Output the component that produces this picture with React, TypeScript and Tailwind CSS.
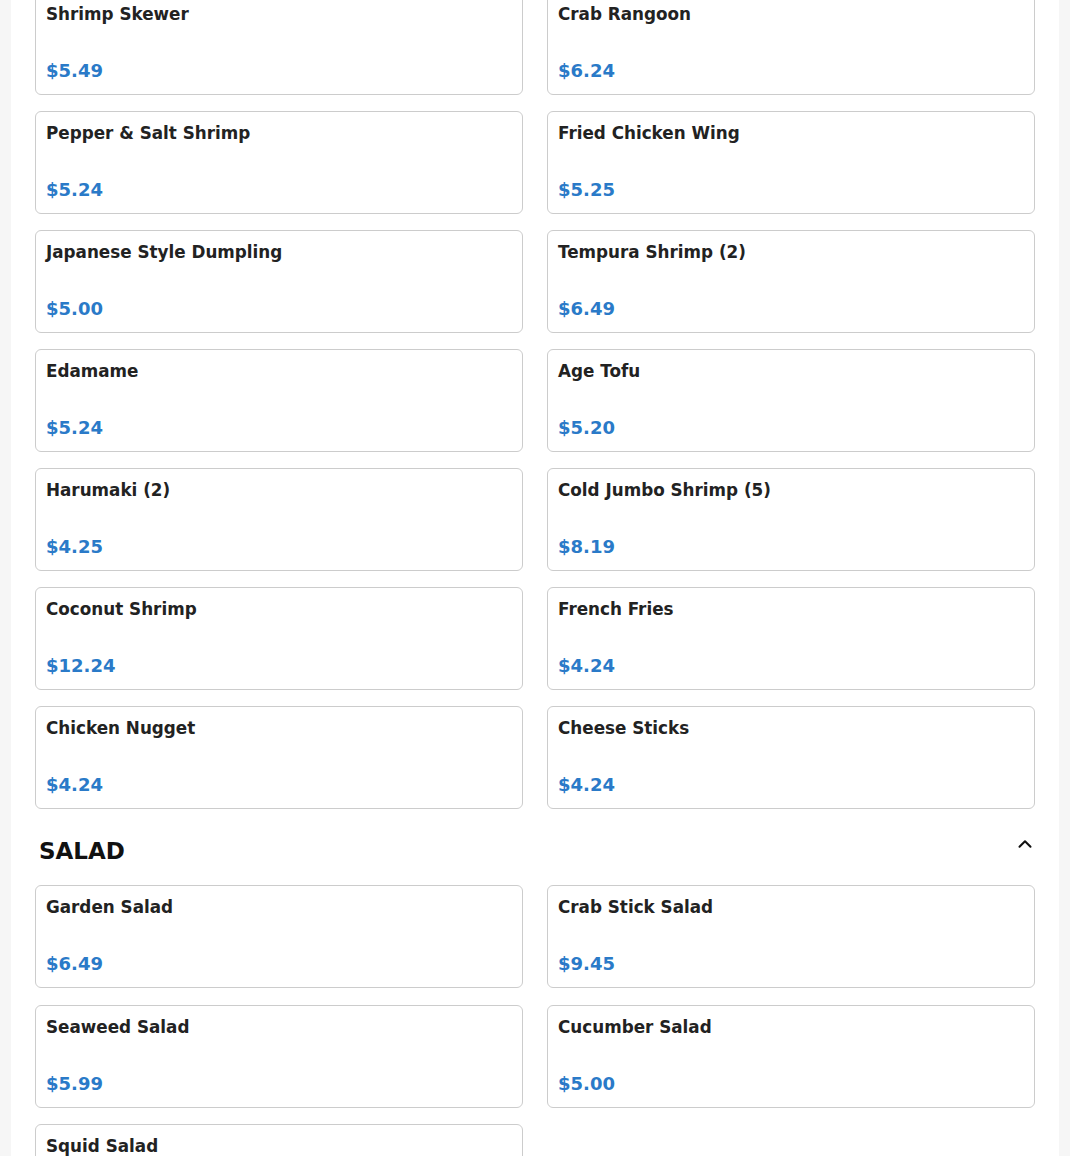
import { ChevronUp } from "lucide-react";

const appetizers: [string, string][] = [
  ["Shrimp Skewer", "$5.49"],
  ["Crab Rangoon", "$6.24"],
  ["Pepper & Salt Shrimp", "$5.24"],
  ["Fried Chicken Wing", "$5.25"],
  ["Japanese Style Dumpling", "$5.00"],
  ["Tempura Shrimp (2)", "$6.49"],
  ["Edamame", "$5.24"],
  ["Age Tofu", "$5.20"],
  ["Harumaki (2)", "$4.25"],
  ["Cold Jumbo Shrimp (5)", "$8.19"],
  ["Coconut Shrimp", "$12.24"],
  ["French Fries", "$4.24"],
  ["Chicken Nugget", "$4.24"],
  ["Cheese Sticks", "$4.24"],
];

const salads: [string, string][] = [
  ["Garden Salad", "$6.49"],
  ["Crab Stick Salad", "$9.45"],
  ["Seaweed Salad", "$5.99"],
  ["Cucumber Salad", "$5.00"],
  ["Squid Salad", "$6.49"],
];

function Card({ name, price }: { name: string; price: string }) {
  return (
    <div className="flex h-[103px] flex-col justify-between rounded-md border border-[#cccccc] bg-white p-[10px]">
      <div className="text-[16.8px] font-bold leading-[23px] text-[#222222]">{name}</div>
      <div className="text-[18px] font-bold leading-[27px] text-[#2a7ac8]">{price}</div>
    </div>
  );
}

export default function App() {
  return (
    <div className="h-[1156px] overflow-hidden bg-[#f6f6f6] px-[11px] font-['DejaVu_Sans',sans-serif]">
      <div className="-mt-[8px] bg-white px-6 pb-6">
        <div className="grid grid-cols-2 gap-x-6 gap-y-4">
          {appetizers.map(([n, p]) => (
            <Card key={n} name={n} price={p} />
          ))}
        </div>
        <div className="mb-[17px] mt-[25px] flex items-start justify-between pl-1">
          <h2 className="text-[23px] font-bold leading-[34px] text-[#111111]">SALAD</h2>
          <ChevronUp className="-mr-[1px] -mt-[1px] h-[22px] w-[22px] text-[#111111]" strokeWidth={2.25} />
        </div>
        <div className="grid grid-cols-2 gap-x-6 gap-y-[16.5px]">
          {salads.map(([n, p]) => (
            <Card key={n} name={n} price={p} />
          ))}
        </div>
      </div>
    </div>
  );
}
